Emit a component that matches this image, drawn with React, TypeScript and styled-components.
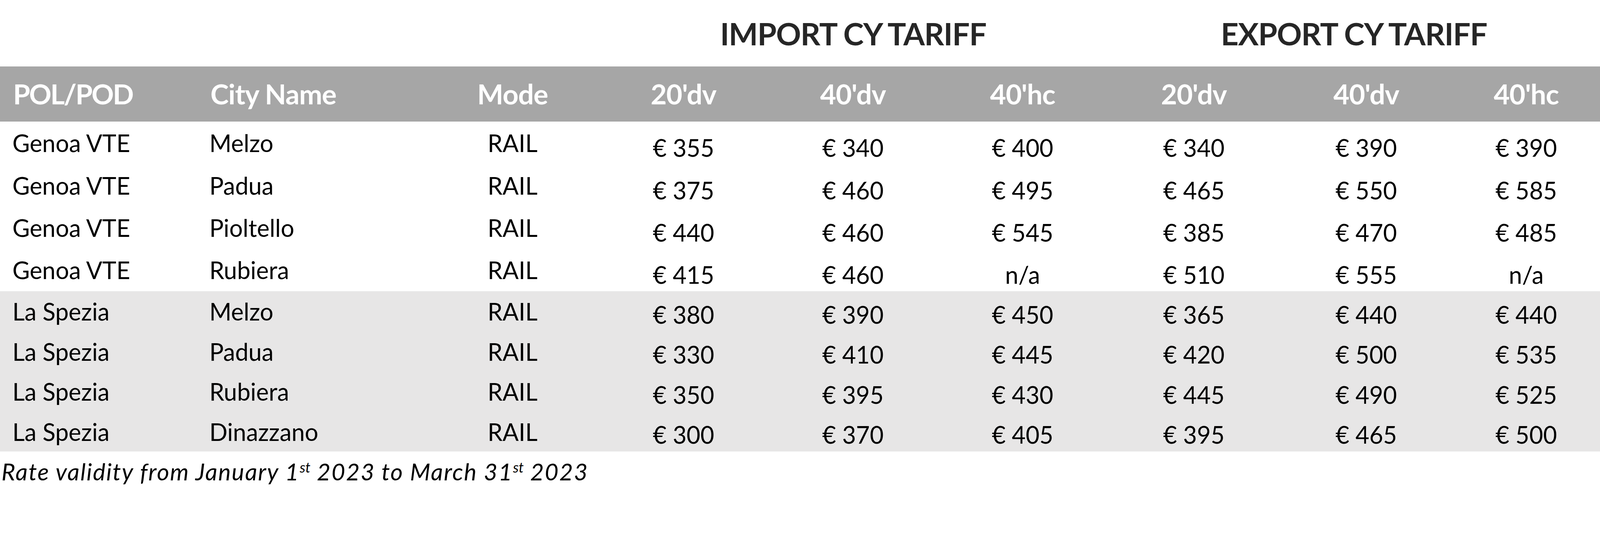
import React from 'react'
import styled, { createGlobalStyle } from 'styled-components'

// the sheet is laid out on a 4395px wide canvas; u() keeps it in proportion to the viewport
const u = (n: number) => `${(n / 43.95).toFixed(4)}vw`

const COLUMNS = [545, 627, 472, 467, 464, 468, 473, 474, 405].map(u).join(' ')

const GlobalStyle = createGlobalStyle`
  html, body {
    margin: 0;
    padding: 0;
    background: #ffffff;
    overflow: hidden;
  }

  body {
    font-family: Lato, "Open Sans", "Liberation Sans", sans-serif;
    color: #000000;
  }
`

const Page = styled.div`
  width: 100vw;
  height: ${u(1384)};
  overflow: hidden;
  background: #ffffff;
`

const TitleRow = styled.div`
  display: grid;
  grid-template-columns: ${COLUMNS};
  height: ${u(182)};
`

const Title = styled.div<{ $from: number; $to: number }>`
  grid-column: ${(p) => p.$from} / ${(p) => p.$to};
  display: flex;
  align-items: flex-end;
  justify-content: center;
  padding-bottom: ${u(48)};
  font-size: ${u(85)};
  font-weight: 700;
  letter-spacing: ${u(-1.5)};
  line-height: 1;
  color: #262626;
`

const HeaderRow = styled.div`
  display: grid;
  grid-template-columns: ${COLUMNS};
  height: ${u(152)};
  background: #a6a6a6;
`

const HeaderCell = styled.div<{ $align: 'left' | 'center'; $pad?: number; $tight?: boolean }>`
  display: flex;
  align-items: center;
  justify-content: ${(p) => (p.$align === 'left' ? 'flex-start' : 'center')};
  padding-left: ${(p) => u(p.$pad ?? 0)};
  font-size: ${u(76)};
  font-weight: 700;
  letter-spacing: ${(p) => u(p.$tight ? -3 : -1)};
  line-height: 1;
  color: #ffffff;
  white-space: nowrap;
`

const BodyRow = styled.div<{ $shaded: boolean }>`
  display: grid;
  grid-template-columns: ${COLUMNS};
  height: ${(p) => (p.$shaded ? u(110) : u(116.25))};
  background: ${(p) => (p.$shaded ? '#e7e6e6' : '#ffffff')};
`

const Cell = styled.div<{
  $align: 'left' | 'center'
  $pad?: number
  $value?: boolean
  $shaded: boolean
}>`
  display: flex;
  align-items: flex-end;
  justify-content: ${(p) => (p.$align === 'left' ? 'flex-start' : 'center')};
  padding-left: ${(p) => u(p.$pad ?? 0)};
  padding-bottom: ${(p) => u(p.$value ? (p.$shaded ? 13 : 12) : p.$shaded ? 21 : 25)};
  font-size: ${u(65.5)};
  line-height: 1;
  white-space: nowrap;
`

const Footnote = styled.div`
  padding: ${u(23)} 0 0 ${u(4)};
  font-size: ${u(65)};
  font-style: italic;
  letter-spacing: ${u(2.4)};
  line-height: 1;
  white-space: nowrap;

  sup {
    font-size: 0.6em;
    line-height: 0;
    letter-spacing: 0;
    vertical-align: ${u(22)};
  }
`

type Row = {
  port: string
  city: string
  mode: string
  rates: string[]
}

const rows: Row[] = [
  { port: 'Genoa VTE', city: 'Melzo', mode: 'RAIL', rates: ['€ 355', '€ 340', '€ 400', '€ 340', '€ 390', '€ 390'] },
  { port: 'Genoa VTE', city: 'Padua', mode: 'RAIL', rates: ['€ 375', '€ 460', '€ 495', '€ 465', '€ 550', '€ 585'] },
  { port: 'Genoa VTE', city: 'Pioltello', mode: 'RAIL', rates: ['€ 440', '€ 460', '€ 545', '€ 385', '€ 470', '€ 485'] },
  { port: 'Genoa VTE', city: 'Rubiera', mode: 'RAIL', rates: ['€ 415', '€ 460', 'n/a', '€ 510', '€ 555', 'n/a'] },
  { port: 'La Spezia', city: 'Melzo', mode: 'RAIL', rates: ['€ 380', '€ 390', '€ 450', '€ 365', '€ 440', '€ 440'] },
  { port: 'La Spezia', city: 'Padua', mode: 'RAIL', rates: ['€ 330', '€ 410', '€ 445', '€ 420', '€ 500', '€ 535'] },
  { port: 'La Spezia', city: 'Rubiera', mode: 'RAIL', rates: ['€ 350', '€ 395', '€ 430', '€ 445', '€ 490', '€ 525'] },
  { port: 'La Spezia', city: 'Dinazzano', mode: 'RAIL', rates: ['€ 300', '€ 370', '€ 405', '€ 395', '€ 465', '€ 500'] },
]

const sizes = ["20'dv", "40'dv", "40'hc", "20'dv", "40'dv", "40'hc"]

const App = () => {
  return (
    <Page>
      <GlobalStyle />
      <TitleRow>
        <Title $from={4} $to={7}>IMPORT CY TARIFF</Title>
        <Title $from={7} $to={10}>EXPORT CY TARIFF</Title>
      </TitleRow>

      <HeaderRow>
        <HeaderCell $align="left" $pad={36} $tight>POL/POD</HeaderCell>
        <HeaderCell $align="left" $pad={33}>City Name</HeaderCell>
        <HeaderCell $align="center">Mode</HeaderCell>
        {sizes.map((s, i) => (
          <HeaderCell key={i} $align="center">{s}</HeaderCell>
        ))}
      </HeaderRow>

      {rows.map((r, i) => {
        const shaded = r.port === 'La Spezia'
        return (
          <BodyRow key={i} $shaded={shaded}>
            <Cell $align="left" $pad={34} $shaded={shaded}>{r.port}</Cell>
            <Cell $align="left" $pad={30} $shaded={shaded}>{r.city}</Cell>
            <Cell $align="center" $shaded={shaded}>{r.mode}</Cell>
            {r.rates.map((v, j) => (
              <Cell key={j} $align="center" $value $shaded={shaded}>{v}</Cell>
            ))}
          </BodyRow>
        )
      })}

      <Footnote>
        Rate validity from January 1<sup>st</sup> 2023 to March 31<sup>st</sup> 2023
      </Footnote>
    </Page>
  )
}

export default App
